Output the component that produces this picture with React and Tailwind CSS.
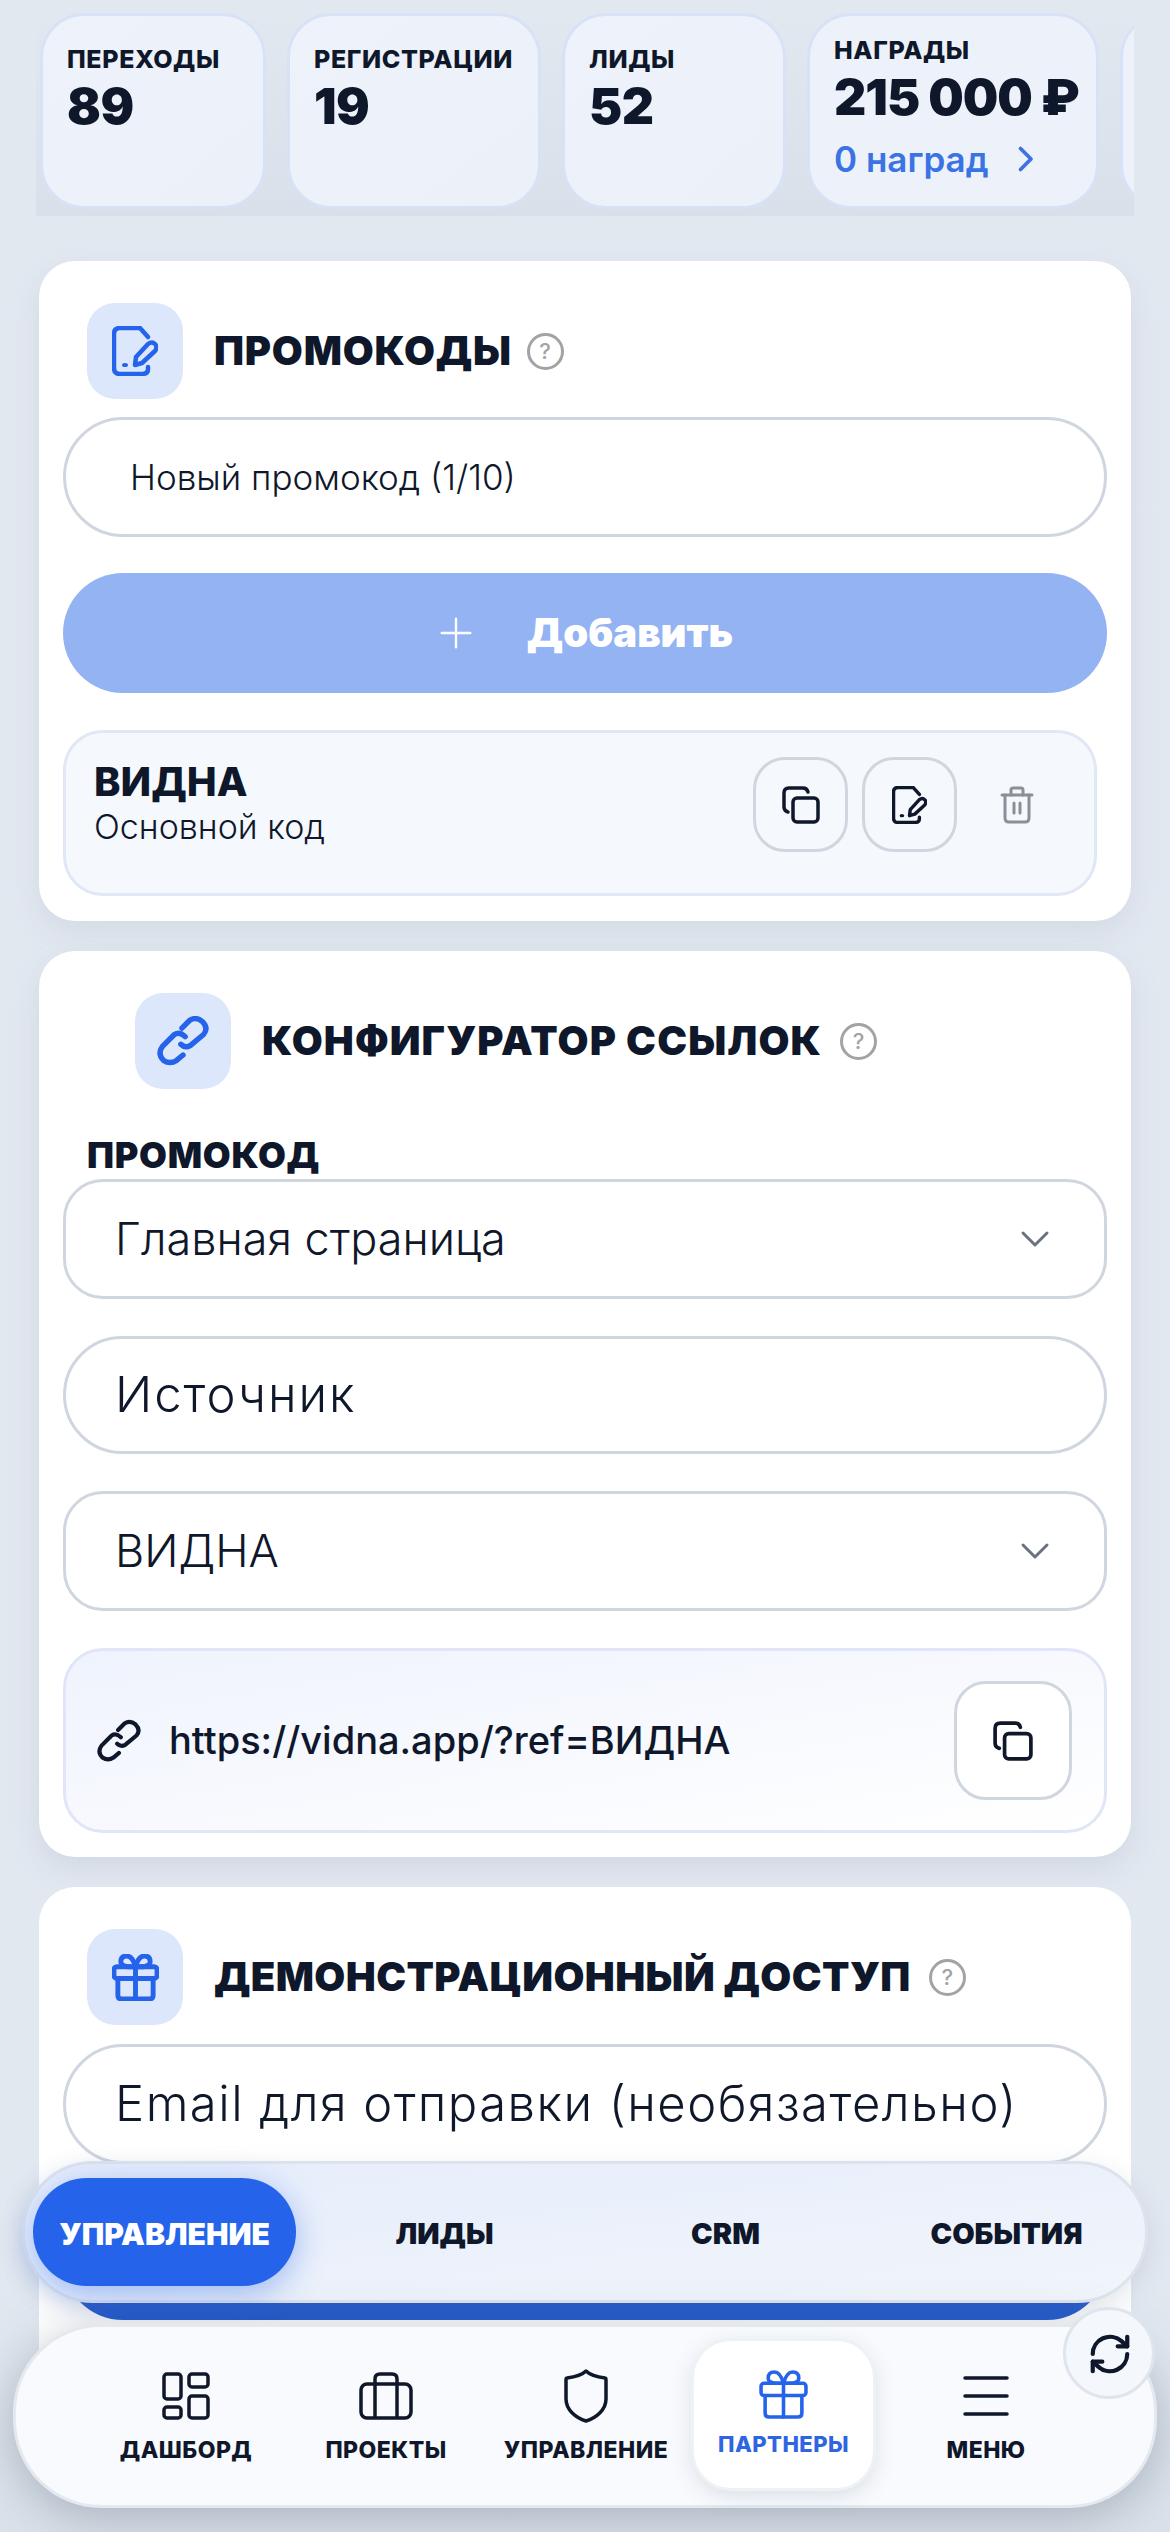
import React from 'react';

const font = "font-['Inter','Noto_Sans',sans-serif]";

const DocPen = ({ className = '', strokeWidth = 4.5 }) => (
  <svg viewBox="0 0 46 50" fill="none" stroke="currentColor" strokeWidth={strokeWidth} strokeLinecap="round" strokeLinejoin="round" className={className}>
    <path d="M36 11 L28 2 H8 Q2 2 2 8 V42 Q2 48 8 48 H30 Q36 48 36 43 V41" />
    <ellipse cx="13" cy="39" rx="3" ry="2" fill="currentColor" stroke="none" />
    <path d="M23 39 L24 31 L36 18 Q40 15 43 18 Q46 21 43 25 L30 37 Z" />
  </svg>
);

const Copy = ({ className = 'w-[38px] h-[38px]' }) => (
  <svg viewBox="0 0 38 38" fill="none" stroke="currentColor" strokeWidth="3.5" strokeLinecap="round" strokeLinejoin="round" className={className}>
    <rect x="11" y="12" width="25" height="24" rx="4" />
    <path d="M26 6 Q25 2 21 2 H7 Q2 2 2 7 V21 Q2 25 6 26" />
  </svg>
);

const Help = () => (
  <div className="w-[37px] h-[37px] rounded-full border-[3px] border-[#a3a3a3] text-[#a3a3a3] flex items-center justify-center text-[22px] font-medium leading-none">?</div>
);

const LinkIcon = ({ className = '', strokeWidth = 5 }) => (
  <svg viewBox="0 0 50 46" fill="none" stroke="currentColor" strokeWidth={strokeWidth} strokeLinecap="round" strokeLinejoin="round" className={className}>
    <path d="M23 26 Q27 30 32 27 L44 17 Q49 11 43 5 Q37 0 31 4 L24 11" />
    <path d="M27 19 Q22 14 17 17 L6 28 Q1 35 7 41 Q13 45 19 41 L25 36" />
  </svg>
);

const Gift = ({ className = '', strokeWidth = 3.5 }) => (
  <svg viewBox="0 0 48 48" fill="none" stroke="currentColor" strokeWidth={strokeWidth} strokeLinecap="round" strokeLinejoin="round" className={className}>
    <rect x="2" y="13" width="44" height="12" rx="3" />
    <path d="M6 25 V42 Q6 46 10 46 H38 Q42 46 42 42 V25" />
    <path d="M24 13 V46" />
    <path d="M24 13 H16 Q9 12 9 8 Q9 2 15 2 Q21 2 24 13" />
    <path d="M24 13 H32 Q39 12 39 8 Q39 2 33 2 Q27 2 24 13" />
  </svg>
);

const Chevron = () => (
  <svg viewBox="0 0 24 24" className="w-12 h-12 text-[#6b7280]" fill="none" stroke="currentColor" strokeWidth="1.5" strokeLinecap="round" strokeLinejoin="round">
    <path d="M6 9l6 6 6-6" />
  </svg>
);

const Stat = ({ label, value, width }) => (
  <div className={`${width} h-[196px] shrink-0 rounded-[44px] bg-gradient-to-br from-[#eef2fa] to-[#ecf1f9] border-[3px] border-[#d8e2f6] pt-[28px] pl-[24px]`}>
    <div className="text-[25px] leading-[30px] font-extrabold text-[#0f172a] tracking-[0.025em] whitespace-nowrap">{label}</div>
    <div className="text-[50px] leading-[60px] mt-[2px] font-black text-[#0f172a] tracking-[-0.01em]">{value}</div>
  </div>
);

const SectionHead = ({ icon, title, indent = 'ml-[48px]', tracking = 'tracking-[0.02em]', helpGap = 'ml-[18px]' }) => (
  <div className={`flex items-center ${indent}`}>
    <div className="w-24 h-24 rounded-[28px] bg-[#dce7fc] text-[#2563eb] flex items-center justify-center shrink-0">{icon}</div>
    <div className={`ml-[31px] text-[40px] leading-[48px] font-black text-[#0f172a] whitespace-nowrap ${tracking}`}>{title}</div>
    <div className={helpGap}><Help /></div>
  </div>
);

const Field = ({ text, select, radius = 'rounded-[40px]', height = 'h-[120px]', size = 'text-[45px]', className = '' }) => (
  <div className={`${height} mx-[24px] border-[3px] border-[#d0d6e0] bg-white flex items-center justify-between pl-[49px] pr-[45px] ${radius} ${className}`}>
    <span className={`${size} font-light text-[#0f172a] whitespace-nowrap`}>{text}</span>
    {select && <Chevron />}
  </div>
);

const IconBtn = ({ children, className = '' }) => (
  <div className={`rounded-[32px] border-[3px] border-[#d0d6e0] flex items-center justify-center text-[#0f172a] ${className}`}>{children}</div>
);

const tabs = ['ЛИДЫ', 'CRM', 'СОБЫТИЯ'];

const NavItem = ({ icon, label }) => (
  <div className="w-[200px] flex flex-col items-center">
    <div className="h-[62px] mt-[3px] flex items-center justify-center text-[#0f172a]">{icon}</div>
    <div className="mt-[9px] text-[23px] leading-[28px] font-extrabold text-[#0f172a] whitespace-nowrap tracking-[0.02em]">{label}</div>
  </div>
);

export default function App() {
  return (
    <div className={`${font} relative w-[1170px] h-[2532px] overflow-hidden bg-gradient-to-b from-[#e2e8f0] from-90% to-[#dbe2ea]`}>
      {/* stats strip */}
      <div className="ml-[36px] mt-[12px] w-[1098px] h-[204px] overflow-hidden bg-gradient-to-b from-[#e2e8f0] to-[#d9e0e9] flex gap-[21px] pl-[4px] pt-[1px]">
        <Stat label="ПЕРЕХОДЫ" value="89" width="w-[226px]" />
        <Stat label="РЕГИСТРАЦИИ" value="19" width="w-[254px]" />
        <Stat label="ЛИДЫ" value="52" width="w-[224px]" />
        <div className="w-[292px] h-[196px] shrink-0 rounded-[44px] bg-[#edf2fa] border-[3px] border-[#d8e2f6] pt-[19px] pl-[24px]">
          <div className="text-[25px] leading-[30px] font-extrabold text-[#0f172a] tracking-[0.025em]">НАГРАДЫ</div>
          <div className="text-[50px] leading-[60px] mt-[2px] font-black text-[#0f172a] tracking-[-0.02em] whitespace-nowrap">215 000 ₽</div>
          <div className="mt-[10px] flex items-center text-[35px] leading-[44px] font-semibold text-[#3b72e4]">
            0 наград
            <svg viewBox="0 0 24 24" className="w-9 h-9 ml-[18px]" fill="none" stroke="currentColor" strokeWidth="2.5" strokeLinecap="round" strokeLinejoin="round"><path d="M9 5l7 7-7 7" /></svg>
          </div>
        </div>
        <div className="w-[60px] h-[196px] shrink-0 rounded-l-[44px] bg-[#edf2fa] border-[3px] border-[#d8e2f6]" />
      </div>

      {/* promo codes */}
      <section className="mt-[45px] mx-[39px] h-[660px] bg-white rounded-[36px] pt-[42px] shadow-[0_12px_28px_rgba(148,163,184,0.18)]">
        <SectionHead icon={<DocPen className="w-[46px] h-[50px]" />} title="ПРОМОКОДЫ" helpGap="ml-[15px]" />
        <div className="mt-[18px] h-[120px] mx-[24px] border-[3px] border-[#d0d6e0] rounded-full flex items-center pl-[64px]">
          <span className="text-[35px] font-light text-[#0f172a]">Новый промокод (1/10)</span>
        </div>
        <div className="mt-[36px] h-[120px] mx-[24px] rounded-full bg-[#93b3f3] flex items-center justify-center text-white">
          <svg viewBox="0 0 24 24" className="w-[38px] h-[38px]" fill="none" stroke="currentColor" strokeWidth="1.5" strokeLinecap="round"><path d="M12 3v18M3 12h18" /></svg>
          <span className="ml-[52px] text-[40px] font-black">Добавить</span>
        </div>
        <div className="mt-[37px] ml-[24px] w-[1034px] h-[166px] rounded-[40px] bg-[#f5f9fd] border-[3px] border-[#e0e7f5] flex justify-between pl-[28px] pr-[60px] pt-[24px]">
          <div>
            <div className="text-[40px] leading-[50px] font-extrabold text-[#0f172a]">ВИДНА</div>
            <div className="text-[34px] leading-[40px] font-light text-[#0f172a]">Основной код</div>
          </div>
          <div className="flex items-start">
            <IconBtn className="w-[95px] h-[95px]"><Copy /></IconBtn>
            <IconBtn className="w-[95px] h-[95px] ml-[14px]"><DocPen className="w-[35px] h-[38px]" /></IconBtn>
            <div className="ml-[43px] h-[95px] flex items-center text-[#8a8f98]">
              <svg viewBox="0 0 34 38" className="w-[34px] h-[38px]" fill="none" stroke="currentColor" strokeWidth="3" strokeLinecap="round" strokeLinejoin="round">
                <path d="M2 9 H32" />
                <path d="M11 9 V4 Q11 2 13 2 H21 Q23 2 23 4 V9" />
                <path d="M5 9 V32 Q5 36 9 36 H25 Q29 36 29 32 V9" />
                <path d="M14 17 V27 M20 17 V27" />
              </svg>
            </div>
          </div>
        </div>
      </section>

      {/* link builder */}
      <section className="mt-[30px] mx-[39px] h-[906px] bg-white rounded-[36px] pt-[42px] shadow-[0_12px_28px_rgba(148,163,184,0.22)]">
        <SectionHead icon={<LinkIcon className="w-[54px] h-[50px]" />} title="КОНФИГУРАТОР ССЫЛОК" indent="ml-[96px]" tracking="tracking-[0.028em]" />
        <div className="mt-[45px] ml-[48px] text-[36px] leading-[42px] font-black text-[#0f172a] tracking-[0.02em]">ПРОМОКОД</div>
        <Field text="Главная страница" select className="mt-[3px]" />
        <Field text="Источник" radius="rounded-[60px]" height="h-[118px]" size="text-[49px] tracking-[0.04em]" className="mt-[37px]" />
        <Field text="ВИДНА" select className="mt-[37px]" />
        <div className="mt-[37px] mx-[24px] h-[185px] rounded-[40px] border-[3px] border-[#e0e6f8] bg-gradient-to-br from-[#eff3fd] to-white flex items-center pl-[30px] pr-[32px]">
          <LinkIcon className="w-[46px] h-[44px] text-[#0f172a] shrink-0" strokeWidth={4.5} />
          <span className="ml-[27px] text-[38px] font-medium text-[#0f172a] whitespace-nowrap">https://vidna.app/?ref=ВИДНА</span>
          <IconBtn className="w-[118px] h-[119px] ml-auto bg-white"><Copy className="w-[40px] h-[40px]" /></IconBtn>
        </div>
      </section>

      {/* demo access */}
      <section className="mt-[30px] mx-[39px] h-[500px] bg-white rounded-[36px] pt-[42px]">
        <SectionHead icon={<Gift className="w-[47px] h-[47px]" strokeWidth={5} />} title="ДЕМОНСТРАЦИОННЫЙ ДОСТУП" tracking="tracking-[0.01em]" />
        <Field text="Email для отправки (необязательно)" radius="rounded-[60px]" size="text-[49px] tracking-[0.03em]" className="mt-[19px]" />
        <div className="mt-[36px] h-[120px] mx-[24px] rounded-full bg-[#2259d0]" />
      </section>

      {/* sub tabs */}
      <div className="absolute left-[22px] top-[2161px] w-[1126px] h-[142px] rounded-full border-[3px] border-[#dde3ec] bg-gradient-to-br from-[#e6edfb] to-[#f1f5fb] shadow-[0_8px_24px_rgba(100,116,139,0.18)] flex items-center pl-[8px]">
        <div className="w-[263px] h-[108px] rounded-[54px] bg-[#2563eb] shadow-[0_8px_32px_rgba(37,99,235,0.4)] flex items-center justify-center text-[30px] font-black text-white shrink-0 pt-[4px]">УПРАВЛЕНИЕ</div>
        <div className="flex ml-[8px] pt-[4px]">
          {tabs.map((t) => (
            <div key={t} className="w-[281px] shrink-0 text-center text-[29px] font-black text-[#0f172a]">{t}</div>
          ))}
        </div>
      </div>

      {/* bottom nav */}
      <div className="absolute left-[13px] top-[2324px] w-[1144px] h-[184px] rounded-[88px] border-[3px] border-[#e4e9f0] bg-[#f8fafd] shadow-[0_10px_50px_rgba(71,85,105,0.35)] flex pl-[70px] pt-[35px]">
        <NavItem label="ДАШБОРД" icon={
          <svg viewBox="0 0 48 48" className="w-[48px] h-[48px]" fill="none" stroke="currentColor" strokeWidth="3.5" strokeLinejoin="round">
            <rect x="2" y="2" width="17" height="25" rx="3" /><rect x="27" y="2" width="19" height="13" rx="3" /><rect x="2" y="35" width="17" height="11" rx="3" /><rect x="27" y="24" width="19" height="22" rx="3" />
          </svg>} />
        <NavItem label="ПРОЕКТЫ" icon={
          <svg viewBox="0 0 54 48" className="w-[54px] h-[48px]" fill="none" stroke="currentColor" strokeWidth="3.5" strokeLinejoin="round">
            <rect x="2" y="12" width="50" height="34" rx="6" /><path d="M16 46 V7 Q16 2 21 2 H33 Q38 2 38 7 V46" />
          </svg>} />
        <NavItem label="УПРАВЛЕНИЕ" icon={
          <svg viewBox="0 0 44 54" className="w-[44px] h-[54px]" fill="none" stroke="currentColor" strokeWidth="3.5" strokeLinejoin="round">
            <path d="M22 2 C26 6 33 8 41 9 Q42 9 42 11 V30 C42 41 32 49 22 52 C12 49 2 41 2 30 V11 Q2 9 3 9 C11 8 18 6 22 2 Z" />
          </svg>} />
        <div className="w-[200px]" />
        <NavItem label="МЕНЮ" icon={
          <svg viewBox="0 0 46 42" className="w-[46px] h-[42px]" fill="none" stroke="currentColor" strokeWidth="3.5" strokeLinecap="round"><path d="M2 3h42M2 21h42M2 39h42" /></svg>} />
      </div>

      {/* active nav tab */}
      <div className="absolute left-[691px] top-[2338px] w-[185px] h-[153px] rounded-[40px] bg-white border-[3px] border-[#eef1f6] shadow-[0_6px_20px_rgba(100,116,139,0.18)] flex flex-col items-center pt-[29px]">
        <Gift className="w-[49px] h-[49px] text-[#2563eb]" />
        <div className="mt-[11px] text-[22px] leading-[28px] font-extrabold text-[#2f65e0] tracking-[0.02em]">ПАРТНЕРЫ</div>
      </div>

      {/* refresh */}
      <div className="absolute left-[1063px] top-[2307px] w-[92px] h-[92px] rounded-full bg-[#f4f7fb] border-[3px] border-[#dfe5ee] flex items-center justify-center text-[#0f172a] pl-[2px] pt-[1px]">
        <svg viewBox="0 0 24 24" className="w-[46px] h-[46px]" fill="none" stroke="currentColor" strokeWidth="2.2" strokeLinecap="round" strokeLinejoin="round">
          <path d="M3 12a9 9 0 0 1 15-6.7L21 8" /><path d="M21 3v5h-5" /><path d="M21 12a9 9 0 0 1-15 6.7L3 16" /><path d="M8 16H3v5" />
        </svg>
      </div>
    </div>
  );
}
